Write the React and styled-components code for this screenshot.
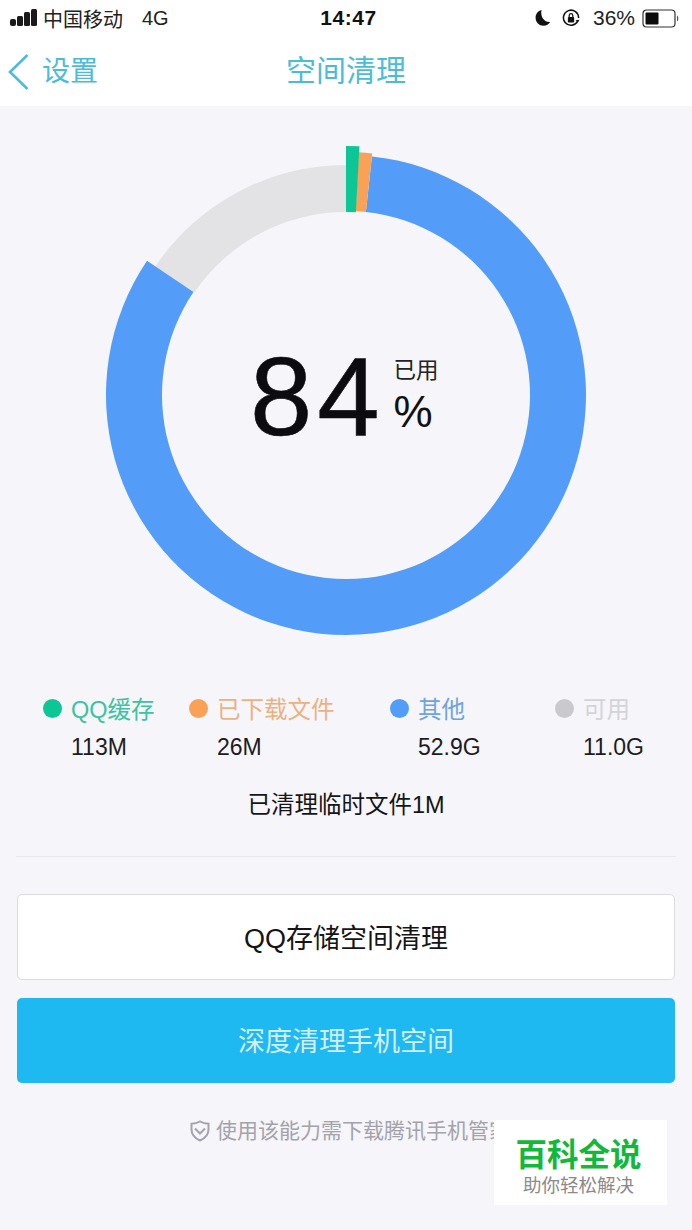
import React from 'react';
import styled, { createGlobalStyle } from 'styled-components';

const GlobalStyle = createGlobalStyle`
  html, body {
    margin: 0;
    padding: 0;
    background: #f5f5fa;
  }
  * {
    box-sizing: border-box;
  }
`;

const Page = styled.div`
  position: relative;
  width: 692px;
  height: 1230px;
  overflow: hidden;
  background: #f5f5fa;
  color: #111;
  font-family: "Liberation Sans", "Noto Sans CJK SC", sans-serif;
`;

const Header = styled.header`
  height: 106px;
  background: #fff;
`;

const StatusBar = styled.div`
  display: grid;
  grid-template-columns: 1fr auto 1fr;
  align-items: center;
  height: 36px;
  padding: 0 12px 0 10px;
`;

const StatusLeft = styled.div`
  display: flex;
  align-items: center;
  font-size: 20px;
  color: #222;
`;

const Carrier = styled.span`
  margin-left: 5px;
`;

const Network = styled.span`
  margin-left: 19px;
  font-size: 20px;
`;

const Clock = styled.div`
  margin-left: 7px;
  font-size: 21px;
  font-weight: 700;
  letter-spacing: 0.6px;
`;

const StatusRight = styled.div`
  display: flex;
  align-items: center;
  justify-content: flex-end;
  font-size: 21px;
  color: #222;
`;

const Percent = styled.span`
  margin: 0 7px 0 13px;
`;

const NavBar = styled.nav`
  position: relative;
  display: flex;
  align-items: center;
  justify-content: center;
  height: 70px;
  padding-bottom: 6px;
`;

const BackLink = styled.div`
  position: absolute;
  left: 7px;
  top: 16px;
  display: flex;
  align-items: center;
  gap: 12px;
  color: #4bbcd8;
  font-size: 28px;
  line-height: 40px;
`;

const NavTitle = styled.h1`
  margin: 0;
  font-size: 30px;
  font-weight: 400;
  color: #4bbcd8;
`;

const ChartWrap = styled.div`
  position: relative;
  display: flex;
  justify-content: center;
  height: 550px;
  padding-top: 26px;
`;

const ChartCenter = styled.div`
  position: absolute;
  left: 250px;
  top: 226px;
  display: flex;
  align-items: center;
  gap: 9px;
`;

const BigNumber = styled.div`
  font-size: 112px;
  line-height: 130px;
  color: #0c0c10;
  letter-spacing: 5px;
  -webkit-text-stroke: 0.6px #0c0c10;
`;

const UnitStack = styled.div`
  display: flex;
  flex-direction: column;
  margin-top: 0;
`;

const UsedLabel = styled.div`
  font-size: 22.500px;
  line-height: 30px;
  color: #222;
`;

const PercentSign = styled.div`
  font-size: 44px;
  line-height: 52px;
  color: #111;
`;

const Legend = styled.div`
  display: grid;
  grid-template-columns: 146px 201px 165px 1fr;
  padding-left: 43px;
  margin-top: 34px;
`;

const LegendItem = styled.div`
  display: flex;
  flex-direction: column;
`;

const LegendHead = styled.div`
  display: flex;
  align-items: center;
  gap: 9px;
  height: 36px;
  font-size: 23.5px;
  color: ${(p) => p.$text};
`;

const Dot = styled.span`
  width: 19px;
  height: 19px;
  border-radius: 50%;
  background: ${(p) => p.$color};
`;

const LegendValue = styled.div`
  margin: 6px 0 0 28px;
  font-size: 23px;
  line-height: 30px;
  color: #1c1c1e;
`;

const CleanNote = styled.div`
  margin-top: 27px;
  text-align: center;
  font-size: 23.5px;
  line-height: 32px;
  color: #151515;
`;

const Divider = styled.hr`
  margin: 35px 16px 0;
  border: 0;
  border-top: 1px solid #e7e7ec;
`;

const Actions = styled.div`
  display: flex;
  flex-direction: column;
  gap: 18px;
  margin-top: 37px;
  padding: 0 17px;
`;

const Button = styled.button`
  height: ${(p) => (p.$primary ? '85px' : '86px')};
  padding: 0 0 2px;
  border: ${(p) => (p.$primary ? '0' : '1px solid #dcdcdf')};
  border-radius: 5px;
  background: ${(p) => (p.$primary ? '#1fb9f2' : '#fff')};
  color: ${(p) => (p.$primary ? '#d4eef8' : '#151515')};
  font-family: inherit;
  font-size: 27px;
`;

const Hint = styled.div`
  display: flex;
  align-items: center;
  gap: 6px;
  margin: 33px 0 0 190px;
  font-size: 21px;
  line-height: 30px;
  color: #a3a3aa;
  white-space: nowrap;
`;

const Watermark = styled.div`
  position: absolute;
  left: 494px;
  top: 1120px;
  width: 173px;
  height: 85px;
  display: flex;
  flex-direction: column;
  align-items: center;
  background: #fff;
`;

const WatermarkTitle = styled.div`
  margin-top: 15px;
  font-size: 31.5px;
  line-height: 40px;
  font-weight: 700;
  color: #12b83a;
  transform: translateX(-2px);
`;

const WatermarkSub = styled.div`
  font-size: 18.500px;
  line-height: 21px;
  color: #8a8a8a;
  transform: translateX(-2px);
`;

const CX = 346;
const CY = 395;
const SVG_LEFT = 96;
const SVG_TOP = 132;

function point(r, deg) {
  const a = (deg * Math.PI) / 180;
  return [CX - SVG_LEFT + r * Math.sin(a), CY - SVG_TOP - r * Math.cos(a)];
}

function arcPath(inner, outer, from, to) {
  const large = to - from > 180 ? 1 : 0;
  const [x1, y1] = point(outer, from);
  const [x2, y2] = point(outer, to);
  const [x3, y3] = point(inner, to);
  const [x4, y4] = point(inner, from);
  return `M${x1} ${y1}A${outer} ${outer} 0 ${large} 1 ${x2} ${y2}L${x3} ${y3}A${inner} ${inner} 0 ${large} 0 ${x4} ${y4}Z`;
}

const segments = [
  { color: '#e3e3e6', inner: 183, outer: 230, from: 304, to: 360 },
  { color: '#539df9', inner: 184, outer: 240, from: 6.2, to: 304 },
  { color: '#f9a257', inner: 184, outer: 243, from: 3, to: 6.2 },
  { color: '#0cc795', inner: 183, outer: 249, from: 0, to: 3.1 },
];

const legend = [
  { label: 'QQ缓存', value: '113M', dot: '#0cc795', text: '#3cc3a0' },
  { label: '已下载文件', value: '26M', dot: '#f9a257', text: '#ecb182' },
  { label: '其他', value: '52.9G', dot: '#539df9', text: '#6fa3dc' },
  { label: '可用', value: '11.0G', dot: '#c9c9ce', text: '#d3d3d8' },
];

function SignalIcon() {
  return (
    <svg width="28" height="18" viewBox="0 0 28 18">
      <rect x="0" y="10" width="6" height="7" rx="2" fill="#1a1a1a" />
      <rect x="7" y="7" width="6" height="10" rx="1.500" fill="#1a1a1a" />
      <rect x="14" y="3" width="6" height="14" rx="1.500" fill="#1a1a1a" />
      <rect x="21" y="0" width="6" height="17" rx="1.500" fill="#1a1a1a" />
    </svg>
  );
}

function MoonIcon() {
  return (
    <svg width="16" height="18" viewBox="0 0 16 18">
      <path d="M6.500 1C2.800 2 .6 5 .6 8.700c0 4.600 3.600 8 8 8 2.800 0 5.200-1.300 6.600-3.700-5.200.6-10.200-4.600-8.700-12Z" fill="#111" />
    </svg>
  );
}

function RotationLockIcon() {
  return (
    <svg width="18" height="20" viewBox="0 0 20 20" style={{ marginLeft: 11 }}>
      <path d="M17.500 13.500A8.400 8.400 0 1 1 18.400 10" fill="none" stroke="#111" strokeWidth="1.700" />
      <path d="M15 12.500l2.600 2.500 1.900-3z" fill="#111" />
      <rect x="6.500" y="9" width="7" height="6" rx="1" fill="#111" />
      <path d="M8 9V7.200a2 2 0 0 1 4 0V9" fill="none" stroke="#111" strokeWidth="1.400" />
    </svg>
  );
}

function BatteryIcon() {
  return (
    <svg width="38" height="19" viewBox="0 0 38 19" style={{ marginTop: 1 }}>
      <rect x="1" y="1" width="32" height="17" rx="3.500" fill="#fff" stroke="#333" strokeWidth="1.200" />
      <rect x="3.500" y="3.500" width="13" height="12" rx="1" fill="#0b0b0b" />
      <path d="M35 6.500c1.700.5 1.700 5.500 0 6z" fill="#555" />
    </svg>
  );
}

function ChevronIcon() {
  return (
    <svg width="23" height="38" viewBox="0 0 23 38">
      <path d="M20.500 2L3 19l17.500 17" fill="none" stroke="#4bbcd8" strokeWidth="2.600" />
    </svg>
  );
}

function ShieldIcon() {
  return (
    <svg width="20" height="22" viewBox="0 0 20 22">
      <path d="M10 1.500c2.700 1.500 5.500 2.200 8.500 2.300v5.700c0 4.700-3.200 8.700-8.500 11-5.300-2.300-8.500-6.300-8.500-11V3.800C4.500 3.700 7.300 3 10 1.500Z" fill="none" stroke="#a3a3aa" strokeWidth="2" />
      <path d="M5 8.500l5 5 5-5" fill="none" stroke="#a3a3aa" strokeWidth="2" />
    </svg>
  );
}

function Donut() {
  return (
    <svg width="500" height="515" viewBox="0 0 500 515">
      {segments.map((s) => (
        <path key={s.color} d={arcPath(s.inner, s.outer, s.from, s.to)} fill={s.color} />
      ))}
    </svg>
  );
}

export default function App() {
  return (
    <Page>
      <GlobalStyle />
      <Header>
        <StatusBar>
          <StatusLeft>
            <SignalIcon />
            <Carrier>中国移动</Carrier>
            <Network>4G</Network>
          </StatusLeft>
          <Clock>14:47</Clock>
          <StatusRight>
            <MoonIcon />
            <RotationLockIcon />
            <Percent>36%</Percent>
            <BatteryIcon />
          </StatusRight>
        </StatusBar>
        <NavBar>
          <BackLink>
            <ChevronIcon />
            <span>设置</span>
          </BackLink>
          <NavTitle>空间清理</NavTitle>
        </NavBar>
      </Header>

      <ChartWrap>
        <Donut />
        <ChartCenter>
          <BigNumber>84</BigNumber>
          <UnitStack>
            <UsedLabel>已用</UsedLabel>
            <PercentSign>%</PercentSign>
          </UnitStack>
        </ChartCenter>
      </ChartWrap>

      <Legend>
        {legend.map((item) => (
          <LegendItem key={item.label}>
            <LegendHead $text={item.text}>
              <Dot $color={item.dot} />
              {item.label}
            </LegendHead>
            <LegendValue>{item.value}</LegendValue>
          </LegendItem>
        ))}
      </Legend>

      <CleanNote>已清理临时文件1M</CleanNote>
      <Divider />

      <Actions>
        <Button>QQ存储空间清理</Button>
        <Button $primary>深度清理手机空间</Button>
      </Actions>

      <Hint>
        <ShieldIcon />
        使用该能力需下载腾讯手机管家
      </Hint>

      <Watermark>
        <WatermarkTitle>百科全说</WatermarkTitle>
        <WatermarkSub>助你轻松解决</WatermarkSub>
      </Watermark>
    </Page>
  );
}
